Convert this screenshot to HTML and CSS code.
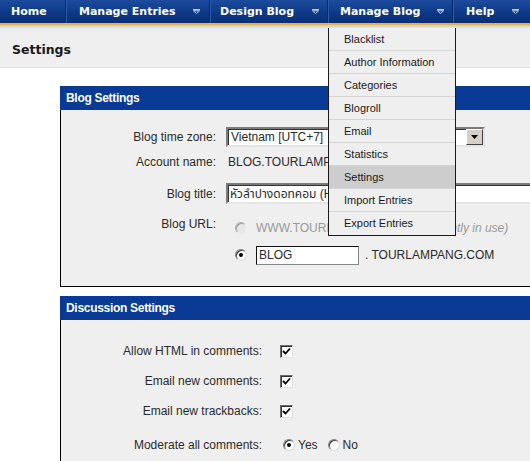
FILE: index.html
```html
<!DOCTYPE html>
<html>
<head>
<meta charset="utf-8">
<link rel="stylesheet" href="styles.css">
</head>
<body>
<div class="page">
  <nav class="nav">
    <div class="nav-item w-home"><span>Home</span></div>
    <div class="nav-item w-entries"><span>Manage Entries</span><svg class="arr" width="7" height="5" viewBox="0 0 7 5"><path d="M0 0.5H7M0.5 1.8H6.5L3.5 4.6Z" fill="none" stroke="#c9d5ee" stroke-width="1"/></svg></div>
    <div class="nav-item w-design"><span>Design Blog</span><svg class="arr" width="7" height="5" viewBox="0 0 7 5"><path d="M0 0.5H7M0.5 1.8H6.5L3.5 4.6Z" fill="none" stroke="#c9d5ee" stroke-width="1"/></svg></div>
    <div class="nav-item w-manage"><span>Manage Blog</span><svg class="arr" width="7" height="5" viewBox="0 0 7 5"><path d="M0 0.5H7M0.5 1.8H6.5L3.5 4.6Z" fill="none" stroke="#c9d5ee" stroke-width="1"/></svg>
      <ul class="menu">
        <li>Blacklist</li>
        <li>Author Information</li>
        <li>Categories</li>
        <li>Blogroll</li>
        <li>Email</li>
        <li>Statistics</li>
        <li class="active">Settings</li>
        <li>Import Entries</li>
        <li>Export Entries</li>
      </ul>
    </div>
    <div class="nav-item w-help"><span>Help</span><svg class="arr" width="7" height="5" viewBox="0 0 7 5"><path d="M0 0.5H7M0.5 1.8H6.5L3.5 4.6Z" fill="none" stroke="#c9d5ee" stroke-width="1"/></svg></div>
  </nav>
  <div class="band"><h1>Settings</h1></div>

  <div class="content">
    <section class="panel blog">
      <div class="panel-head">Blog Settings</div>
      <div class="panel-body">
        <div class="row r1">
          <div class="label">Blog time zone:</div>
          <div class="select"><span class="sel-val">Vietnam [UTC+7]</span><span class="sel-btn"><svg width="7" height="4" viewBox="0 0 7 4"><path d="M0 0H7L3.5 4Z" fill="#000"/></svg></span></div>
        </div>
        <div class="row r2">
          <div class="label">Account name:</div>
          <div class="value">BLOG.TOURLAMPANG.COM</div>
        </div>
        <div class="row r3">
          <div class="label">Blog title:</div>
          <div class="input wide">หัวลำปางดอทคอม (Hua Lampang)</div>
        </div>
        <div class="row r4">
          <div class="label top">Blog URL:</div>
          <span class="radio disabled"></span>
          <span class="muted">WWW.TOURLAMPANG.COM <em>(currently in use)</em></span>
        </div>
        <div class="row r5">
          <div class="label"></div>
          <span class="radio checked"></span>
          <div class="input small">BLOG</div>
          <span class="value suffix">. TOURLAMPANG.COM</span>
        </div>
      </div>
    </section>

    <section class="panel disc">
      <div class="panel-head">Discussion Settings</div>
      <div class="panel-body">
        <div class="row d1">
          <div class="label">Allow HTML in comments:</div>
          <span class="check"><svg width="9" height="9" viewBox="0 0 9 9"><path d="M1 4L3.5 6.5L8 1.5" fill="none" stroke="#000" stroke-width="1.8"/></svg></span>
        </div>
        <div class="row d2">
          <div class="label">Email new comments:</div>
          <span class="check"><svg width="9" height="9" viewBox="0 0 9 9"><path d="M1 4L3.5 6.5L8 1.5" fill="none" stroke="#000" stroke-width="1.8"/></svg></span>
        </div>
        <div class="row d3">
          <div class="label">Email new trackbacks:</div>
          <span class="check"><svg width="9" height="9" viewBox="0 0 9 9"><path d="M1 4L3.5 6.5L8 1.5" fill="none" stroke="#000" stroke-width="1.8"/></svg></span>
        </div>
        <div class="row d4">
          <div class="label">Moderate all comments:</div>
          <span class="radio checked"></span><span class="opt">Yes</span>
          <span class="radio"></span><span class="opt">No</span>
        </div>
      </div>
    </section>
  </div>
</div>
</body>
</html>
```
FILE: styles.css
```css
* { box-sizing: border-box; }
html, body { margin: 0; padding: 0; background: #fff; }
body { font-family: "Liberation Sans", Arial, "Noto Sans Thai", "Noto Sans", sans-serif; font-size: 12px; color: #2a2a2a; }
.page { width: 530px; height: 461px; overflow: hidden; position: relative; }

.nav {
  display: flex;
  height: 25px;
  background: linear-gradient(#1d4c9e, #0c3786 60%, #0a2f76);
  border-bottom: 2px solid #dcb84a;
  font-family: "DejaVu Sans", Verdana, sans-serif;
  font-weight: bold;
  font-size: 11px;
  color: #fff;
  position: relative;
  z-index: 5;
}
.nav-item {
  position: relative;
  display: flex;
  align-items: center;
  height: 23px;
  border-right: 1px solid #0a2a66;
  box-shadow: inset 1px 0 0 #2a5aa8;
  flex: none;
}
.nav-item span { display: block; }
.arr { position: absolute; top: 9px; }
.w-home { width: 66px; padding-left: 11px; box-shadow: none; }
.w-entries { width: 144px; padding-left: 13px; }
.w-entries .arr { left: 127px; }
.w-design { width: 118px; padding-left: 10px; }
.w-design .arr { left: 102px; }
.w-manage { width: 125px; padding-left: 12px; }
.w-manage .arr { left: 109px; }
.w-help { width: 80px; padding-left: 13px; border-right: none; }
.w-help .arr { left: 59px; }

.menu {
  position: absolute;
  left: 0;
  top: 28px;
  width: 128px;
  margin: 0;
  padding: 0;
  list-style: none;
  background: #efefef;
  border: 1px solid #1a1a1a;
  border-top: none;
  font-family: "Liberation Sans", Arial, sans-serif;
  font-weight: normal;
  font-size: 11px;
  color: #1a1a1a;
}
.menu li {
  height: 23px;
  line-height: 23px;
  padding-left: 15px;
  border-bottom: 1px solid #d4d4d4;
}
.menu li:last-child { border-bottom: none; }
.menu li.active { background: #cdcdcd; }

.band {
  height: 43px;
  background: linear-gradient(#c8c8c8, #e6e6e6 3px, #efefef 6px, #efefef);
  border-bottom: 1px solid #e2e2e2;
  display: flex;
  align-items: center;
  padding-left: 12px;
  padding-top: 6px;
}
.band h1 {
  margin: 0;
  font-family: "DejaVu Sans", Verdana, sans-serif;
  font-size: 12.5px;
  font-weight: bold;
  color: #1a1a1a;
}

.content { padding: 18px 0 0 60px; }
.panel {
  width: 520px;
  border-left: 1px solid #000;
  border-bottom: 1px solid #000;
  background: #efefef;
}
.panel + .panel { margin-top: 9px; }
.panel-head {
  height: 24px;
  background: #083a96;
  color: #fff;
  font-weight: bold;
  font-size: 12px;
  letter-spacing: -0.3px;
  display: flex;
  align-items: center;
  margin-left: -1px;
  padding-left: 6px;
}

.row { display: flex; align-items: center; height: 20px; }
.blog .label { width: 155px; text-align: right; flex: none; margin-right: 10px; }
.label.top { align-self: flex-start; margin-top: -1px; }
.blog .panel-body { padding: 17px 0 21px; }
.r2 { margin-top: 5px; }
.r3 { margin-top: 11px; height: 21px; }
.r4 { margin-top: 14px; }
.r5 { margin-top: 7px; height: 20px; }
.value { padding-left: 2px; }

.select {
  width: 259px;
  height: 20px;
  background: #fff;
  border: 2px solid;
  border-color: #7a7a7a #e4e4e4 #e4e4e4 #7a7a7a;
  box-shadow: inset 1px 1px 0 #333;
  display: flex;
  align-items: center;
  justify-content: space-between;
}
.sel-val { padding-left: 3px; }
.sel-btn {
  width: 17px;
  height: 16px;
  background: #d4d0c8;
  border: 1px solid;
  border-color: #fff #404040 #404040 #fff;
  display: flex;
  align-items: center;
  justify-content: center;
}
.input {
  height: 21px;
  background: #fff;
  border: 2px solid;
  border-color: #7a7a7a #e4e4e4 #e4e4e4 #7a7a7a;
  box-shadow: inset 1px 1px 0 #333;
  padding-left: 2px;
  display: flex;
  align-items: center;
  white-space: nowrap;
  overflow: hidden;
}
.input.wide { width: 320px; flex: none; }
.input.small { width: 103px; height: 19px; border: 1px solid #111; border-right-color: #888; border-bottom-color: #888; box-shadow: none; margin-left: 9px; }
.suffix { margin-left: 4px; }

.radio {
  width: 12px;
  height: 12px;
  border-radius: 50%;
  background: #fff;
  border: 1px solid #808080;
  border-right-color: #dcdcdc;
  border-bottom-color: #dcdcdc;
  box-shadow: inset 1px 1px 0 #404040;
  position: relative;
  flex: none;
}
.blog .radio { margin-left: 9px; }
.radio.disabled { background: #e6e6e6; border-color: #b0b0b0 #eee #eee #b0b0b0; box-shadow: inset 1px 1px 0 #a0a0a0; }
.radio.checked::after {
  content: "";
  position: absolute;
  left: 3px; top: 3px;
  width: 4px; height: 4px;
  border-radius: 50%;
  background: #000;
}
.muted { color: #9a9a9a; margin-left: 9px; white-space: nowrap; }
.muted em { font-style: italic; }

.disc .panel-body { padding: 21px 0 20px; }
.disc .label { width: 201px; text-align: right; flex: none; margin-right: 18px; }
.d2, .d3 { margin-top: 10px; }
.d4 { margin-top: 14px; }
.check {
  width: 13px;
  height: 13px;
  background: #fff;
  border: 1px solid;
  border-color: #6a6a6a #e0e0e0 #e0e0e0 #6a6a6a;
  box-shadow: inset 1px 1px 0 #303030;
  display: flex;
  align-items: center;
  justify-content: center;
  flex: none;
}
.d4 .radio { margin-left: 3px; }
.opt { margin-left: 3px; margin-right: 7px; }
```
